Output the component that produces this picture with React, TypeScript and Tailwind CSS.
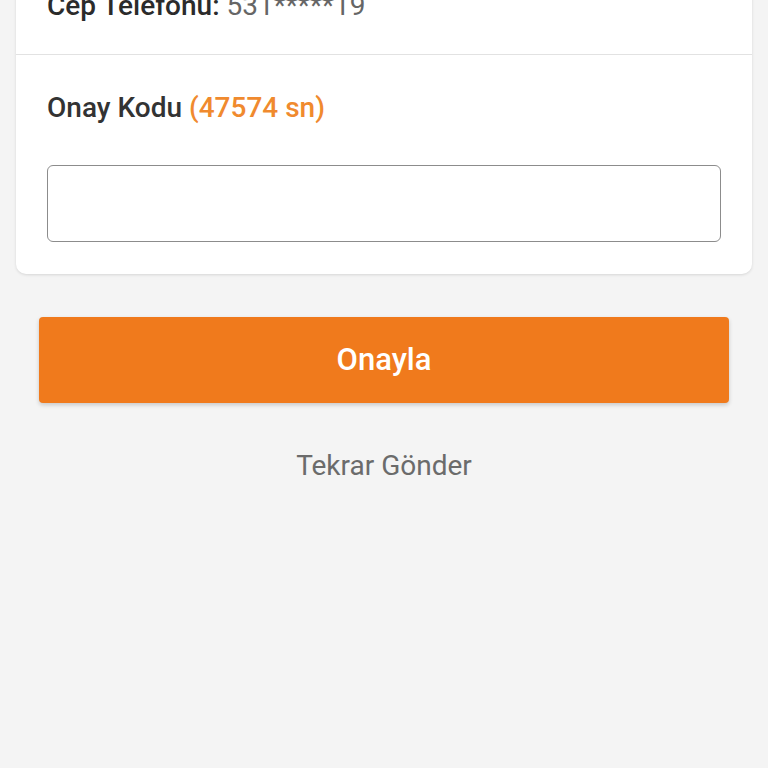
export default function App() {
  return (
    <div className="min-h-[768px] bg-[#f4f4f4] font-['Roboto',sans-serif] overflow-hidden">
      <div className="mx-4 -mt-[30px] rounded-[10px] bg-white shadow-[0_1px_3px_rgba(0,0,0,0.12)]">
        <div className="border-b border-[#e2e2e2] px-[31px] pt-[18px] pb-[30px] text-[28px] leading-[36px]">
          <span className="font-medium text-[#2b2b2b]">Cep Telefonu: </span>
          <span className="text-[#666666]">531*****19</span>
        </div>
        <div className="px-[31px] pt-[35px] pb-[32px]">
          <div className="text-[28px] leading-[36px] font-medium text-[#333333]">
            Onay Kodu <span className="text-[#f08a2e]">(47574 sn)</span>
          </div>
          <input
            className="mt-[39px] block h-[77px] w-full rounded-[6px] border-[1.5px] border-[#8c8c8c] bg-white px-3 text-[26px] outline-none"
            type="text"
          />
        </div>
      </div>
      <div className="px-[39px] pt-[43px]">
        <button className="flex h-[86px] w-full items-center justify-center rounded-[4px] bg-[#f07a1c] text-[31px] font-medium text-white shadow-[0_2px_4px_rgba(0,0,0,0.18)]">
          Onayla
        </button>
        <div className="mt-[45px] text-center text-[28px] leading-[36px] text-[#6b6b6b]">
          Tekrar Gönder
        </div>
      </div>
    </div>
  );
}
